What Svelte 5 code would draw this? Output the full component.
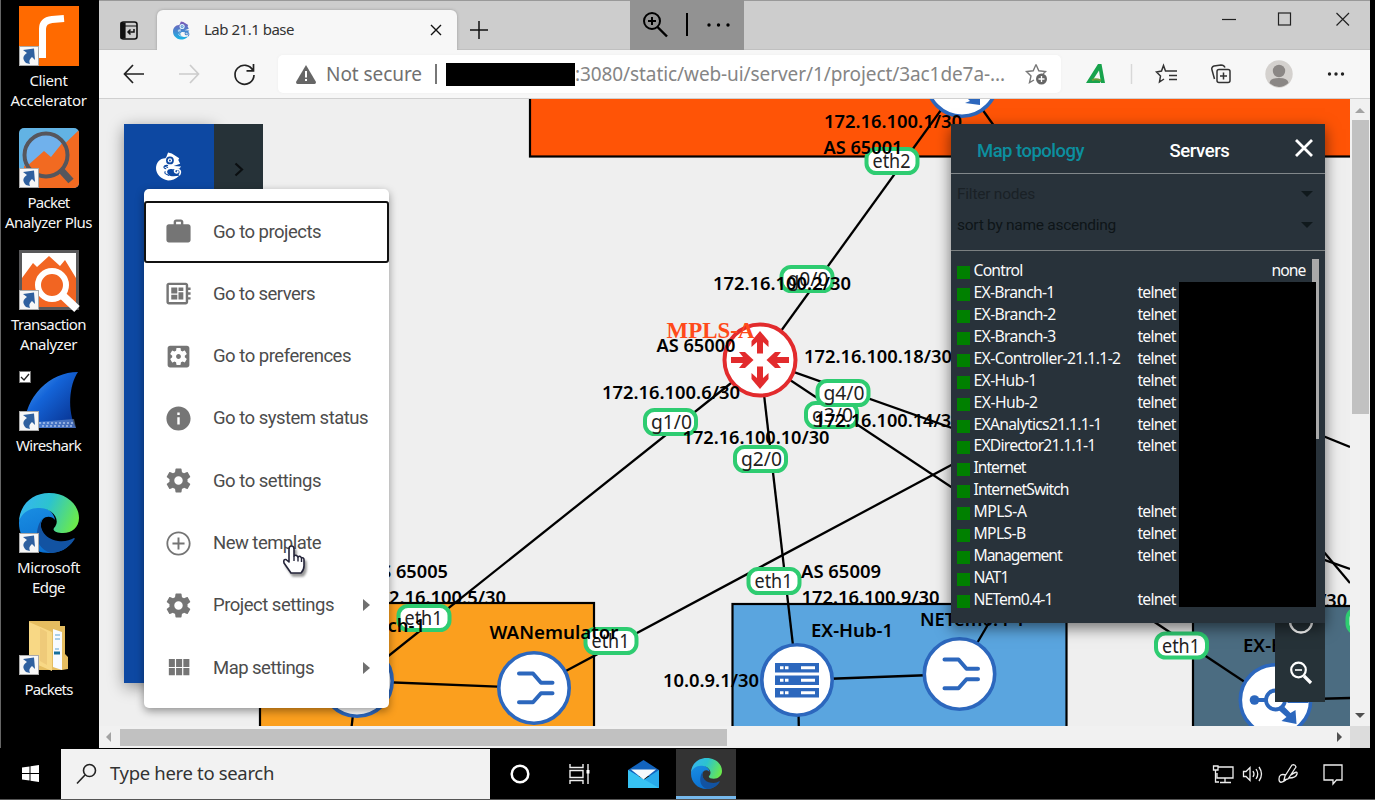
<script>
  // Spreads letter-spacing so a label takes the given width in pixels.
  function fit(node, width) {
    const apply = (w) => {
      node.style.letterSpacing = '0px';
      const range = document.createRange();
      range.selectNodeContents(node);
      const natural = range.getBoundingClientRect().width;
      node.style.letterSpacing = (w - natural) / node.textContent.length + 'px';
    };
    apply(width);
    return { update: apply };
  }

  const shortcuts = [
    { icon: 'client', lines: [['Client', 38], ['Accelerator', 76]] },
    { icon: 'packet', lines: [['Packet', 42], ['Analyzer Plus', 87]] },
    { icon: 'trans', lines: [['Transaction', 75], ['Analyzer', 57]] },
    { icon: 'shark', lines: [['Wireshark', 65]] },
    { icon: 'edge', lines: [['Microsoft', 63], ['Edge', 33]] },
    { icon: 'folder', lines: [['Packets', 48]] }
  ];

  const menu = [
    { icon: 'work', text: 'Go to projects', w: 108, focus: true },
    { icon: 'server', text: 'Go to servers', w: 102 },
    { icon: 'pref', text: 'Go to preferences', w: 138 },
    { icon: 'info', text: 'Go to system status', w: 155 },
    { icon: 'gear', text: 'Go to settings', w: 108 },
    { icon: 'plus', text: 'New template', w: 108 },
    { icon: 'gear', text: 'Project settings', w: 121, sub: true },
    { icon: 'grid', text: 'Map settings', w: 101, sub: true }
  ];

  const nodes = [
    ['Control', 49, 'none'],
    ['EX-Branch-1', 81, 'telnet'],
    ['EX-Branch-2', 82, 'telnet'],
    ['EX-Branch-3', 82, 'telnet'],
    ['EX-Controller-21.1.1-2', 147, 'telnet'],
    ['EX-Hub-1', 63, 'telnet'],
    ['EX-Hub-2', 64, 'telnet'],
    ['EXAnalytics21.1.1-1', 128, 'telnet'],
    ['EXDirector21.1.1-1', 122, 'telnet'],
    ['Internet', 52, ''],
    ['InternetSwitch', 95, ''],
    ['MPLS-A', 53, 'telnet'],
    ['MPLS-B', 52, 'telnet'],
    ['Management', 88, 'telnet'],
    ['NAT1', 35, ''],
    ['NETem0.4-1', 79, 'telnet']
  ];

  const links = [
    [962, 81, 760, 360], [760, 360, 357, 681], [760, 360, 797, 680],
    [760, 360, 1350, 569], [760, 360, 1275, 702], [534, 688, 1000, 439],
    [357, 681, 534, 688], [797, 680, 959, 674], [959, 674, 1000, 604],
    [962, 81, 1002, 137], [1318, 545, 1350, 583], [1318, 434, 1350, 447],
    [1275, 700, 1350, 698], [357, 681, 350, 740], [798, 680, 799, 740]
  ];

  const ports = [
    [892, 161, 'eth2'], [807, 279, 'g0/0'], [670.5, 422, 'g1/0'], [760.5, 459, 'g2/0'],
    [831.5, 415, 'g3/0'], [843, 393, 'g4/0'], [424, 618, 'eth1'], [611, 641, 'eth1'],
    [774, 581, 'eth1'], [1181.5, 645.5, 'eth1'], [1373, 621, 'eth1']
  ];

  const labels = [
    [824, 128, 138, '172.16.100.1/30'], [823.5, 154, 79, 'AS 65001'],
    [713, 290, 138, '172.16.100.2/30'], [656.5, 351.500, 79, 'AS 65000'],
    [804, 363, 148, '172.16.100.18/30'], [602, 398.500, 138, '172.16.100.6/30'],
    [814.5, 426.500, 147, '172.16.100.14/30'], [682.5, 443.500, 147, '172.16.100.10/30'],
    [369, 578, 79, 'AS 65005'], [368, 603.500, 138, '172.16.100.5/30'],
    [317, 632, 108, 'EX-Branch-1'], [489.5, 639, 129, 'WANemulator'],
    [663, 687, 96, '10.0.9.1/30'], [801, 578, 80, 'AS 65009'],
    [801.5, 603.500, 138, '172.16.100.9/30'], [811, 637, 82, 'EX-Hub-1'],
    [920, 626, 105, 'NETem0.4-1'], [1201, 606.500, 146, '172.16.100.13/30'],
    [1243, 652, 82, 'EX-Hub-2']
  ];
</script>

{#snippet edgeLogo(id)}
  <defs>
    <linearGradient id="{id}a" x1="0" y1=".3" x2="1" y2=".6">
      <stop offset="0" stop-color="#36b5f0" /><stop offset=".45" stop-color="#2cc3cf" /><stop offset="1" stop-color="#6bea4a" />
    </linearGradient>
    <linearGradient id="{id}b" x1="0" y1="0" x2=".4" y2="1">
      <stop offset="0" stop-color="#1a8fe3" /><stop offset="1" stop-color="#0a6fd0" />
    </linearGradient>
  </defs>
  <path fill="url(#{id}b)" d="M0 30C0 18 12 11 23 14c7 2 12 6 13 13-3-4-9-4-12-1-6 8 1 21 14 24 7 1 13-1 17-4-5 9-14 14-25 14C13 60 0 47 0 30Z" />
  <path fill="#1253a2" d="M24 25c-6 8 1 21 15 23 7 1 12-1 16-3 1 0 1 1 0 2-6 9-15 13-24 13-10-4-14-12-13-21 1-7 3-11 6-14Z" />
  <path fill="url(#{id}a)" d="M0 28C1 11 14 0 30 0c18 0 30 12 30 25 0 9-7 15-16 15-6 0-11-2-9-5 8-9-3-20-14-20C11 14 3 20 0 28Z" />
{/snippet}

{#snippet chameleon(paint, ink, bg)}
  <path fill={paint} d="M11 5 13 0 17 1 25 6 24 8 26 12 19 14.500 27 15 25 17.500 18 18C15 17 13 18 12 20 12 24 16 26 19 25.500L25 25C21 29 17 30 13 30 5 29 0 23 0 17 0 11 4 6 10 6Z" />
  <path d="M25 24.500C28 20 25 17.500 22 18S19.500 22 22 22 24 20 22.500 20" fill="none" stroke={ink} stroke-width="1.700" />
  <circle cx="15" cy="8.500" r="4.200" fill={bg} /><circle cx="15" cy="8.500" r="2.300" fill={ink} /><circle cx="15" cy="8.500" r="1" fill={bg} />
  <path d="M13 14C8 13 7 17 11 17.500M9 14.500 13 16M10 20C8 24 13 23 14 25" fill="none" stroke={bg} stroke-width="1.200" />
{/snippet}

{#snippet menuIcon(name)}
  <svg class="mi" viewBox="0 0 24 24" width="29" height="29">
    {#if name === 'work'}
      <path d="M20 6h-4V4c0-1.100-.9-2-2-2h-4c-1.100 0-2 .9-2 2v2H4c-1.100 0-2 .9-2 2v11c0 1.100.9 2 2 2h16c1.100 0 2-.9 2-2V8c0-1.100-.9-2-2-2zm-6 0h-4V4h4v2z" />
    {:else if name === 'server'}
      <path d="M22 9V7h-2V5c0-1.100-.9-2-2-2H4c-1.100 0-2 .9-2 2v14c0 1.100.9 2 2 2h14c1.100 0 2-.9 2-2v-2h2v-2h-2v-2h2v-2h-2V9h2zm-4 10H4V5h14v14zM6 13h5v4H6zm6-6h4v3h-4zM6 7h5v5H6zm6 4h4v6h-4z" />
    {:else if name === 'pref'}
      <path d="M12 10c-1.100 0-2 .9-2 2s.9 2 2 2 2-.9 2-2-.9-2-2-2zm7-7H5c-1.110 0-2 .9-2 2v14c0 1.100.89 2 2 2h14c1.110 0 2-.9 2-2V5c0-1.100-.89-2-2-2zm-1.750 9c0 .23-.02.46-.05.68l1.480 1.160c.13.11.17.3.08.45l-1.400 2.420c-.09.15-.27.21-.43.15l-1.740-.7c-.36.28-.76.51-1.180.69l-.26 1.850c-.03.17-.18.3-.35.3h-2.800c-.17 0-.32-.13-.35-.29l-.26-1.850c-.43-.18-.82-.41-1.180-.69l-1.740.7c-.16.06-.34 0-.43-.15l-1.400-2.420c-.09-.15-.05-.34.08-.45l1.480-1.160c-.03-.23-.05-.46-.05-.69 0-.23.02-.46.05-.68l-1.480-1.160c-.13-.11-.17-.3-.08-.45l1.400-2.420c.09-.15.27-.21.43-.15l1.740.7c.36-.28.76-.51 1.180-.69l.26-1.850c.03-.17.18-.3.35-.3h2.800c.17 0 .32.13.35.29l.26 1.850c.43.18.82.41 1.180.69l1.740-.7c.16-.06.34 0 .43.15l1.400 2.420c.09.15.05.34-.08.45l-1.480 1.160c.03.23.05.46.05.69z" />
    {:else if name === 'info'}
      <path d="M12 2C6.480 2 2 6.480 2 12s4.480 10 10 10 10-4.480 10-10S17.520 2 12 2zm1 15h-2v-6h2v6zm0-8h-2V7h2v2z" />
    {:else if name === 'gear'}
      <path d="M19.430 12.980c.04-.32.07-.64.07-.98s-.03-.66-.07-.98l2.110-1.650c.19-.15.24-.42.12-.64l-2-3.460c-.12-.22-.39-.3-.61-.22l-2.490 1c-.52-.4-1.080-.73-1.690-.98l-.38-2.650C14.460 2.180 14.250 2 14 2h-4c-.25 0-.46.18-.49.42l-.38 2.650c-.61.25-1.170.59-1.690.98l-2.490-1c-.23-.09-.49 0-.61.22l-2 3.460c-.13.22-.07.49.12.64l2.110 1.650c-.04.32-.07.65-.07.98s.03.66.07.98l-2.110 1.650c-.19.15-.24.42-.12.64l2 3.460c.12.22.39.3.61.22l2.490-1c.52.4 1.080.73 1.690.98l.38 2.650c.03.24.24.42.49.42h4c.25 0 .46-.18.49-.42l.38-2.650c.61-.25 1.170-.59 1.690-.98l2.490 1c.23.09.49 0 .61-.22l2-3.460c.12-.22.07-.49-.12-.64l-2.110-1.650zM12 15.500c-1.930 0-3.500-1.570-3.500-3.500s1.570-3.500 3.500-3.500 3.500 1.570 3.500 3.500-1.570 3.500-3.500 3.500z" />
    {:else if name === 'plus'}
      <path d="M12.800 7h-1.600v4.200H7v1.600h4.200V17h1.600v-4.200H17v-1.600h-4.200V7zM12 2C6.480 2 2 6.480 2 12s4.480 10 10 10 10-4.480 10-10S17.520 2 12 2zm0 18.500c-4.700 0-8.500-3.800-8.500-8.500S7.300 3.500 12 3.500s8.500 3.800 8.500 8.500-3.800 8.500-8.500 8.500z" />
    {:else}
      <path d="M4 11.500h5V5H4v6.500zm0 7h5V12.500H4v6zm6 0h5V12.500h-5v6zm6 0h5V12.500h-5v6zm-6-7h5V5h-5v6.500zM16 5v6.500h5V5h-5z" />
    {/if}
  </svg>
{/snippet}

{#snippet emulator(x, y)}
  <g transform="translate({x} {y})">
    <circle r="35.200" class="dev" />
    <path d="M-15-14.500H-1L7-5.300H18.500M-15 14.300H-1L7 5.200H18.500" fill="none" stroke="#2c67bd" stroke-width="4" stroke-linecap="round" stroke-linejoin="round" />
  </g>
{/snippet}

{#snippet hub(x, y)}
  <g transform="translate({x} {y})">
    <circle r="35.200" class="dev" />
    <g fill="#2c67bd">
      <circle cx="-21" cy="0" r="4.800" /><path d="M-21-2H-8V2H-21ZM8-3 20-13 16-16 30-18 26-6 22-10 12 2ZM2 9 11 17 6 21 21 24 20 10 15 13 9 7Z" />
      <path d="M12-1H33V3H12Z" />
    </g>
    <circle r="9.500" fill="#fff" stroke="#2c67bd" stroke-width="3.800" />
  </g>
{/snippet}

<div class="desk">
  <aside class="icons">
    {#each shortcuts as s}
      <div class="shortcut">
        <div class="pic">
          <svg width="60" height="60" viewBox="0 0 60 60">
            {#if s.icon === 'client'}
              <rect width="60" height="60" fill="#ff6a00" />
              <path d="M23.500 52V23Q23.500 14.500 33 13.500L45 12.500" fill="none" stroke="#fff" stroke-width="7" />
            {:else if s.icon === 'packet'}
              <clipPath id="pk"><rect width="60" height="60" rx="5" /></clipPath>
              <g clip-path="url(#pk)">
                <rect width="60" height="60" fill="#62b3e4" /><path d="M60 2V60H5V38L25 23 32 29Z" fill="#f26a21" />
                <circle cx="27" cy="27" r="21.500" fill="#f26a21" />
                <path d="M7 39A22 22 0 0 1 44 14L32 29 25 23Z" fill="#70b1ec" />
                <circle cx="27" cy="27" r="21.500" fill="none" stroke="#56565c" stroke-width="4" />
                <path d="M42 42 52 53" stroke="#56565c" stroke-width="7" />
              </g>
            {:else if s.icon === 'trans'}
              <rect x="1.500" y="1.500" width="57" height="57" fill="#fff" stroke="#58585a" stroke-width="3" />
              <path d="M3 28 14 13 18 17 30 6 41 16 46 10 57 28V57H3Z" fill="#f26522" />
              <circle cx="33" cy="35" r="14" fill="#f26522" stroke="#fff" stroke-width="6" />
              <path d="M43 45 58 59" stroke="#fff" stroke-width="8" />
            {:else if s.icon === 'shark'}
              <defs><linearGradient id="fin" x1="0" y1="0" x2="1" y2="1"><stop offset="0" stop-color="#58a9f5" /><stop offset=".4" stop-color="#1464d8" /><stop offset="1" stop-color="#062b86" /></linearGradient></defs>
              <path d="M5 57C6 25 31 1 59 1 50 14 48 40 57 57Z" fill="url(#fin)" />
              <path d="M18 51 55 48 57 57H18Z" fill="#8fb0e4" opacity=".45" /><path d="M20 52H54M23 55H54" stroke="#dce8fa" stroke-dasharray="2 2" />
              <rect x=".5" y=".5" width="11" height="11" fill="#fff" stroke="#777" /><path d="m2 6 3 3 5-6" fill="none" stroke="#222" stroke-width="1.300" />
            {:else if s.icon === 'edge'}
              {@render edgeLogo('d')}
            {:else}
              <path d="M10 6H41V11H46V39L49 42V54L43 55H10Z" fill="#e5bd60" />
              <path d="M34 14 43 17V55L34 52Z" fill="#f8fbff" /><path d="M36 20H41M36 24H41M36 34H40" stroke="#8fc0e2" stroke-width="1.500" /><path d="M35 38H41" stroke="#176f9c" stroke-width="3" />
              <path d="M10 7 33 17V56L10 46Z" fill="#f8d885" /><path d="M21 13 28 17V50L21 46Z" fill="#efca79" />
            {/if}
          </svg>
          <svg class="arrow" width="20" height="20" viewBox="0 0 20 20"><rect x=".5" y=".5" width="19" height="19" fill="#f7f7f7" stroke="#aaa" /><path d="M4 4 15 2.500 16 14 13 11C10 14 10 15 11 18L7 17C2 12 5 9 8 7Z" fill="#2f609f" /></svg>
        </div>
        {#each s.lines as [text, w]}<span class="cap"><b use:fit={w}>{text}</b></span>{/each}
      </div>
    {/each}
  </aside>

  <main class="browser">
    <header class="tabs">
      <svg class="tabact" width="18" height="19" viewBox="0 0 18 19"><rect x="1" y="1" width="16" height="17" rx="2.500" fill="none" stroke="#111" stroke-width="1.600" /><path d="M1 5H17M1 2H5V17H1Z" fill="#111" stroke="#111" stroke-width="1.200" /><path d="M14 8V11H8M10.500 8.500 8 11 10.500 13.500" fill="none" stroke="#111" stroke-width="1.500" /></svg>
      <div class="tab">
        <svg width="17" height="19" viewBox="0 0 28 30"><defs><linearGradient id="cg" x2="0" y2="1"><stop offset="0" stop-color="#7d55b5" /><stop offset="1" stop-color="#17b5e6" /></linearGradient></defs>{@render chameleon('url(#cg)', '#4a86cc', '#dff2fb')}</svg>
        <span class="tabtitle"><b use:fit={90}>Lab 21.1 base</b></span>
        <svg width="12" height="12" viewBox="0 0 12 12"><path d="M1 1 11 11M11 1 1 11" stroke="#111" stroke-width="1.400" /></svg>
      </div>
      <svg class="newtab" width="18" height="18" viewBox="0 0 18 18"><path d="M9 0V18M0 9H18" stroke="#111" stroke-width="1.500" /></svg>
      <div class="zoomer">
        <svg width="114" height="50" viewBox="0 0 114 50" fill="none" stroke="#000"><circle cx="22" cy="21" r="8" stroke-width="2" /><path d="M27.500 27 37 36.500" stroke-width="2.400" /><path d="M18 21H26M22 17V25M57 13V36" stroke-width="2" /><g fill="#000" stroke="none"><circle cx="79" cy="25" r="1.700" /><circle cx="88.500" cy="25" r="1.700" /><circle cx="98" cy="25" r="1.700" /></g></svg>
      </div>
      <svg class="winctl" width="130" height="16" viewBox="0 0 130 16" fill="none" stroke="#222" stroke-width="1.200"><path d="M1 8.500H15" /><rect x="57.500" y="2" width="12" height="12" /><path d="M115.500 2 128 14.500M128 2 115.500 14.500" /></svg>
    </header>

    <div class="toolbar">
      <svg class="nav" width="132" height="26" viewBox="0 0 132 26" fill="none" stroke="#222" stroke-width="1.700"><path d="M21 13H1.500M10 4 1.500 13 10 22" /><path d="M56 13H75M67 4 75.500 13 67 22" stroke="#ccc" /><path d="M130 9.500A9.500 9.500 0 1 0 131 14M130.500 3V9.800H123.500" /></svg>
      <div class="url">
        <svg width="20" height="19" viewBox="0 0 20 19"><path d="M10 0 20 17Q20 19 18.500 19H1.500Q0 19 0 17Z" fill="#666" /><path d="M10 6V12.500M10 14V16" stroke="#fff" stroke-width="2" /></svg>
        <span class="sec"><b use:fit={96}>Not secure</b></span>
        <i class="sep"></i><i class="mask"></i>
        <span class="addr"><b use:fit={430}>:3080/static/web-ui/server/1/project/3ac1de7a-...</b></span>
        <svg class="fav" width="23" height="22" viewBox="0 0 23 22"><path d="M11 1.500 13.800 7.800 20.500 8.500 18 11M9 17 4.500 19.500 6 13 1.500 8.500 8.200 7.800 11 1.500" fill="none" stroke="#777" stroke-width="1.400" /><circle cx="16.500" cy="16" r="5.500" fill="#666" /><path d="M16.500 13V19M13.500 16H19.500" stroke="#fff" stroke-width="1.300" /></svg>
      </div>
      <svg class="tools" width="262" height="30" viewBox="1085 59 262 30" fill="none" stroke="#333" stroke-width="1.500">
        <path d="M1086 83 1098 64H1101.500L1105 83H1101L1099 70.500 1092.500 80.500 1096 79 1101 80.500 1100 83Z" fill="#18a34c" stroke="none" /><path d="M1092 80.500Q1095 78 1101 80.500" stroke="#6a9d3a" stroke-width="2" />
        <path d="M1131.500 64V84" stroke="#d8d8d8" />
        <path d="M1170 71H1165.500L1163.500 65.500 1161.500 71 1156.500 72 1160.500 76 1159.500 82 1164 79M1168 71H1177M1169 75.500H1177M1169 79.500H1177" />
        <rect x="1217" y="69.500" width="13" height="13" rx="2" /><path d="M1223.500 72.500V79.500M1220 76H1227M1214.500 79 1212 70Q1211 67 1214 66L1221 65Q1224 65 1225 67.500" />
        <g stroke="none"><circle cx="1279" cy="74" r="13.700" fill="#d4d1ce" /><circle cx="1279" cy="71" r="6.200" fill="#8b8785" /><path d="M1269.500 83Q1270 78 1279 78T1288.500 83Q1279 91 1269.500 83" fill="#8b8785" />
          <g fill="#222"><circle cx="1329.500" cy="74" r="1.700" /><circle cx="1336" cy="74" r="1.700" /><circle cx="1342.500" cy="74" r="1.700" /></g></g>
      </svg>
    </div>

    <div class="page">
      <div class="canvas">
        <svg class="map" width="1251" height="627" viewBox="99 99 1251 627">
          <rect x="530" y="60" width="900" height="96.500" fill="#ff5406" class="zone" />
          <rect x="260" y="603" width="334" height="160" fill="#fb9f1e" class="zone" />
          <rect x="732.500" y="604" width="334" height="160" fill="#5aa5df" class="zone" />
          <rect x="1193" y="606" width="260" height="160" fill="#4b6c81" class="zone" />
          {#each links as [a, b, c, d]}<line x1={a} y1={b} x2={c} y2={d} stroke="#000" stroke-width="2.300" />{/each}
          <g transform="translate(962 81)"><circle r="35.200" class="dev" /><path d="M-3 9 8 20 3 22 18 24V9L13 14 5 6Z" fill="#2c67bd" /></g>
          <circle cx="357" cy="681" r="35.200" class="dev" />
          {@render emulator(534, 688)}
          {@render emulator(959.5, 674)}
          {@render hub(1275.5, 700)}
          <g transform="translate(797 680)">
            <circle r="35.200" class="dev" />
            {#each [-17, -4.5, 8] as y}
              <rect x="-22" {y} width="44" height="9.500" fill="#2c67bd" /><path d="M-17 {y + 4.7}H-13.500M-12 {y + 4.7}H-8.500M4 {y + 4.7}H18" stroke="#fff" stroke-width="3" />
            {/each}
          </g>
          <g transform="translate(760 360)">
            <circle r="35.500" fill="#fff" stroke="#e22b2d" stroke-width="4" />
            <g fill="#e22b2d">
              {#each [0, 180] as r}<path transform="rotate({r})" d="M0-29 8.500-19V-13L3-18V-6.500H-3V-18L-8.500-13V-19Z" /><path transform="rotate({r})" d="M-29-3H-17L-21-8H-15L-6.500 0-15 8H-21L-17 3H-29Z" />{/each}
            </g>
          </g>
          {#each ports as [x, y, t]}
            <rect x={x - 25.5} y={y - 12} width="51" height="24" rx="9.500" fill="#fff" stroke="#2ecc71" stroke-width="4" />
            <text x={x - 19.5} y={y + 7} class="port" textLength={t[0] === 'g' ? 41 : 38} lengthAdjust="spacingAndGlyphs">{t}</text>
          {/each}
          <text x="666.500" y="338" class="mpls" textLength="88" lengthAdjust="spacingAndGlyphs">MPLS-A</text>
          {#each labels as [x, y, w, t]}<text {x} {y} class="lab" textLength={w} lengthAdjust="spacingAndGlyphs">{t}</text>{/each}
        </svg>

        <div class="side"><div class="blue"><svg width="26" height="29" viewBox="0 0 28 30">{@render chameleon('#fff', '#fff', '#0d48a2')}</svg></div>
          <div class="dark"><svg width="10" height="15" viewBox="0 0 10 15"><path d="M1.500 1.500 8 7.500 1.500 13.500" fill="none" stroke="#0b0f11" stroke-width="2.200" /></svg></div></div>

        <div class="menu">
          {#each menu as m}
            <div class="row" class:focus={m.focus}>
              {@render menuIcon(m.icon)}
              <span><b use:fit={m.w}>{m.text}</b></span>
              {#if m.sub}<i class="tri"></i>{/if}
            </div>
          {/each}
        </div>
        <svg class="hand" width="26" height="32" viewBox="0 0 26 32"><path d="M7 17V4Q7 1 9.500 1T12 4V11Q14 9 16 12 18 10 19.500 13 22 12 22 15V21Q22 25 19 28H9L2 18Q1 14 4 14.500Z" fill="#fff" stroke="#25253a" stroke-width="1.600" stroke-linejoin="round" /><path d="M12 11V16M16 12V16.500M19.500 13V17" stroke="#25253a" stroke-width="1.400" /></svg>

        <div class="zoomside">
          <svg width="50" height="80" viewBox="0 0 50 80" fill="none" stroke="#fff"><circle cx="26" cy="-1.500" r="11" stroke-width="2.300" /><path d="M23-1H29" stroke-width="2" /><circle cx="23.500" cy="47" r="7.300" stroke-width="2.200" /><path d="M29 53 36 60" stroke-width="3.200" /><path d="M20 47H27" stroke-width="1.600" /></svg>
        </div>

        <section class="topo">
          <div class="heads"><span class="on"><b use:fit={107}>Map topology</b></span><span><b use:fit={60}>Servers</b></span><svg width="18" height="18" viewBox="0 0 18 18"><path d="M1 1 17 17M17 1 1 17" stroke="#fff" stroke-width="2.800" /></svg></div>
          <div class="filters">
            <div class="f dim"><span><b use:fit={78}>Filter nodes</b></span><i></i></div>
            <div class="f"><span><b use:fit={159}>sort by name ascending</b></span><i></i></div>
          </div>
          <div class="list">
            {#each nodes as [name, w, con]}
              <div class="n"><i></i><span class="nm"><b use:fit={w}>{name}</b></span>{#if con}<span class:none={con === 'none'} class="con"><b use:fit={con === 'none' ? 34 : 38}>{con}</b></span>{/if}</div>
            {/each}
          </div>
          <i class="thumb"></i><i class="hide"></i>
        </section>
      </div>
      <div class="vs"><i class="up"></i><i class="vt"></i><i class="down"></i></div>
      <div class="hs"><i class="lf"></i><i class="ht"></i><i class="rt"></i></div>
      <div class="corner"></div>
    </div>
  </main>

  <footer>
    <div class="start"><svg width="17" height="17" viewBox="0 0 17 17" fill="#fff"><path d="M0 2.400 7.500 1.400V8H0ZM8.500 1.200 17 0V8H8.500ZM0 9H7.500V15.600L0 14.600ZM8.500 9H17V17L8.500 15.800Z" /></svg></div>
    <div class="search"><svg width="21" height="22" viewBox="0 0 21 22"><circle cx="13.500" cy="7.500" r="6" fill="none" stroke="#222" stroke-width="1.600" /><path d="M9 12 1 20.500" stroke="#222" stroke-width="1.600" /></svg><span><b use:fit={164}>Type here to search</b></span></div>
    <div class="tk"><svg width="20" height="20" viewBox="0 0 20 20"><circle cx="10" cy="10" r="8.300" fill="none" stroke="#fff" stroke-width="2.500" /></svg></div>
    <div class="tk"><svg width="22" height="20" viewBox="0 0 22 20" fill="none" stroke="#eee" stroke-width="1.400"><path d="M1 0V3.500H14V0M1 20V16.500H14V20M1 6.500H14V13.500H1ZM19 0V20" /><rect x="17.500" y="6" width="3" height="3.500" fill="#fff" stroke="none" /></svg></div>
    <div class="tk mail"><svg width="31" height="28" viewBox="0 0 31 28"><path d="M0 10 15.500 0 31 10V16H0Z" fill="#1263bd" /><path d="M0 10 15.500 20 31 10V28H0Z" fill="#28a9ea" /><path d="M0 10 31 28H0Z" fill="#37c2f3" /><path d="M3 9.500H28L15.500 19.500Z" fill="#f5f9fc" /></svg></div>
    <div class="tk act"><svg width="31" height="31" viewBox="0 0 60 60">{@render edgeLogo('t')}</svg></div>
    <svg class="tray" width="132" height="24" viewBox="1212 762 132 24" fill="none" stroke="#eee" stroke-width="1.300">
      <path d="M1218 767H1233V778H1217V773M1225 778V782M1220 782.500H1231M1213.500 766H1218V770H1213.500ZM1215.500 770V782H1219" />
      <path d="M1243.500 771.500H1246L1250 767.500V780.500L1246 776.500H1243.500ZM1253 771Q1255 774 1253 777M1256 769Q1259.500 774 1256 779M1259 767Q1264 774 1259 781" />
      <path d="M1285 776 1292 765Q1295 764 1296 767L1288 779 1284 780ZM1286 775Q1279 773 1279 779T1286 780M1291 775Q1298 770 1297 774T1289 778" />
      <path d="M1324 765H1342V780H1336.500L1333 784V780H1324Z" />
    </svg>
  </footer>
</div>

<style>
  :global(body) { margin: 0; background: #000; overflow: hidden; }
  b { font-weight: inherit; white-space: nowrap; }
  svg { display: block; flex: none; overflow: visible; }
  .desk { width: 1375px; height: 800px; display: grid; grid-template: 748px 52px / 99px 1271px; background: #000; overflow: hidden; font-family: "Noto Sans", "Open Sans", sans-serif; }
  .icons { border-left: 1px solid #666; box-sizing: border-box; padding-top: 6px; }
  .shortcut { height: 121.800px; width: 95px; display: flex; flex-direction: column; align-items: center; }
  .pic { position: relative; width: 60px; height: 60px; margin-bottom: 4px; flex: none; }
  .arrow { position: absolute; left: 0; bottom: 0; }
  .cap { color: #f6f6f6; font-size: 15px; line-height: 20px; height: 20px; flex: none; }
  .browser { display: grid; grid-template-rows: 50px 49px 649px; width: 1271px; overflow: hidden; background: #f0f0f0; }
  .tabs { background: #cdcdcd; display: flex; border-top: 1px solid #999; box-sizing: border-box; box-shadow: inset 0 -1px #c0c0c0; }
  .tabact { margin: 20px 0 0 21px; }
  .tab { margin: 9px 0 0 19px; width: 300px; box-sizing: border-box; padding: 0 15px 0 16px; background: #f7f7f7; border-radius: 6px 6px 0 0; display: flex; align-items: center; box-shadow: 0 0 3px #999; clip-path: inset(-3px -3px 0 -3px); }
  .tabtitle { margin-left: 14px; flex: 1; font-size: 15px; line-height: 20px; margin-top: -2px; color: #333; }
  .newtab { margin: 20px 0 0 13px; }
  .zoomer { background: #929292; margin: -1px 0 0 142px; width: 114px; height: 50px; }
  .winctl { margin: 10px 0 0 476.500px; }
  .toolbar { background: #f7f7f7; display: flex; align-items: center; border-bottom: 1px solid #d0d0d0; box-sizing: border-box; }
  .nav { margin-left: 24px; }
  .url { margin-left: 23px; width: 783px; height: 38px; border-radius: 5px; background: #fff; display: flex; align-items: center; box-shadow: 0 0 3px #eee; padding-left: 18px; box-sizing: border-box; }
  .sec, .addr { font-size: 19px; color: #707070; line-height: 30px; }
  .sec { width: 95px; margin-left: 10px; }
  .sep { width: 2px; height: 20px; background: #777; margin-left: 14px; }
  .mask { width: 129px; height: 23px; background: #000; margin-left: 9px; }
  .addr { color: #858585; margin-left: 0; width: 430px; }
  .fav { margin-left: 20px; }
  .tools { margin-left: 24px; }
  .page { display: grid; grid-template: 627px 22px / 1251px 20px; }
  .canvas { position: relative; overflow: hidden; background: #efefef; }
  .map { overflow: hidden; }
  .zone { stroke: #000; stroke-width: 2.200; }
  .dev { fill: #fff; stroke: #2c67bd; stroke-width: 3.600; }
  .port { font: 20px "Noto Sans", sans-serif; fill: #222; }
  .lab { font: 600 18px "Noto Sans", sans-serif; }
  .mpls { font: bold 23px "Liberation Serif", serif; fill: #ff4a1a; }
  .side { position: absolute; left: 25px; top: 25px; width: 139px; height: 559px; display: flex; align-items: flex-start; }
  .blue { width: 90px; height: 559px; background: #0d48a2; box-shadow: 0 4px 15px #0006; display: flex; justify-content: center; padding-top: 28px; box-sizing: border-box; }
  .dark { width: 49px; height: 90px; background: #263238; display: flex; justify-content: center; padding-top: 38px; box-sizing: border-box; }
  .menu { position: absolute; left: 44.500px; top: 90px; width: 245.500px; height: 519px; box-sizing: border-box; padding-top: 12px; background: #fff; border-radius: 5px; box-shadow: 0 3px 9px #0006; }
  .row { height: 62.350px; box-sizing: border-box; display: flex; align-items: center; padding: 0 19px 0 20px; font: 18.500px Roboto, sans-serif; color: #4c4c4c; }
  .row span { margin-left: 20.500px; flex: 1; }
  .focus { height: 61.500px; border: 2px solid #111; border-radius: 3px; padding: 0 18px; }
  .mi { fill: #757575; }
  .tri { border: 6px solid transparent; border-left: 7px solid #707070; border-right: 0; }
  .hand { position: absolute; left: 183px; top: 446px; filter: drop-shadow(2px 3px 1px #0006); }
  .zoomside { position: absolute; left: 1176px; top: 524px; width: 50px; height: 79px; background: #263238; }
  .topo { position: absolute; left: 852px; top: 25px; width: 374px; height: 499px; background: #28323a; box-shadow: 0 5px 14px #0008; }
  .heads { height: 50px; border-bottom: 1px solid #81878a; display: flex; align-items: center; font: 500 18.500px Roboto, sans-serif; color: #fff; padding: 5px 12px 0 26px; box-sizing: border-box; }
  .heads .on { color: #0c8f9f; width: 192.500px; }
  .heads svg { margin: -6px 0 0 auto; }
  .filters { height: 77px; border-bottom: 1px solid #7b8081; padding-top: 4px; box-sizing: border-box; }
  .f { height: 31px; display: flex; align-items: center; justify-content: space-between; padding: 0 12px 0 6px; font: 15.500px Roboto, sans-serif; color: #0e1518; }
  .f i { border: 6px solid transparent; border-top-color: #10191c; border-bottom: 0; }
  .dim { color: #1a2126; }
  .list { padding: 8px 0 0 6px; }
  .n { height: 21.950px; display: flex; align-items: center; font-size: 15.700px; line-height: 20px; color: #fafafa; }
  .n i { width: 13px; height: 13px; background: #008000; margin-top: 5px; }
  .nm { margin-left: 3.500px; width: 164px; }
  .none { margin-left: 134px; }
  .con { white-space: nowrap; }
  .thumb { position: absolute; right: 6px; top: 135px; width: 7px; height: 180px; background: #a9a9a9; }
  .hide { position: absolute; left: 228px; top: 158px; width: 137px; height: 325px; background: #000; }
  .vs { background: #f1f1f1; display: flex; flex-direction: column; align-items: center; padding: 9px 0 8px; box-sizing: border-box; }
  .hs { background: #f1f1f1; display: flex; align-items: center; padding: 0 8px 0 7px; }
  .vt { width: 17px; height: 294px; background: #c1c1c1; margin-top: 7px; margin-bottom: auto; }
  .ht { height: 17px; width: 607px; background: #c1c1c1; margin: 0 auto 0 9px; }
  .up, .down, .lf, .rt { border: 5px solid transparent; }
  .up { border-bottom-color: #a3a3a3; border-top: 0; }
  .down { border-top-color: #505050; border-bottom: 0; }
  .lf { border-right-color: #a3a3a3; border-left: 0; }
  .rt { border-left-color: #505050; border-right: 0; }
  .corner { background: #dcdcdc; }
  footer { grid-column: 1 / 3; width: 1375px; height: 52px; display: flex; align-items: center; background: #000; border-bottom: 1px solid #555; box-sizing: border-box; }
  .start { width: 61px; display: flex; justify-content: center; }
  .search { width: 429px; height: 50px; box-sizing: border-box; background: #f2f2f2; display: flex; align-items: center; padding-left: 15px; font-size: 18.500px; color: #333; }
  .search span { margin: -2px 0 0 13px; }
  .tk { width: 60px; height: 50px; display: flex; align-items: center; justify-content: center; }
  .mail { width: 66px; }
  .act { background: #333; box-shadow: inset 0 -3px #76b9ed; width: 60px; }
  .tray { margin-left: 476px; }
</style>
